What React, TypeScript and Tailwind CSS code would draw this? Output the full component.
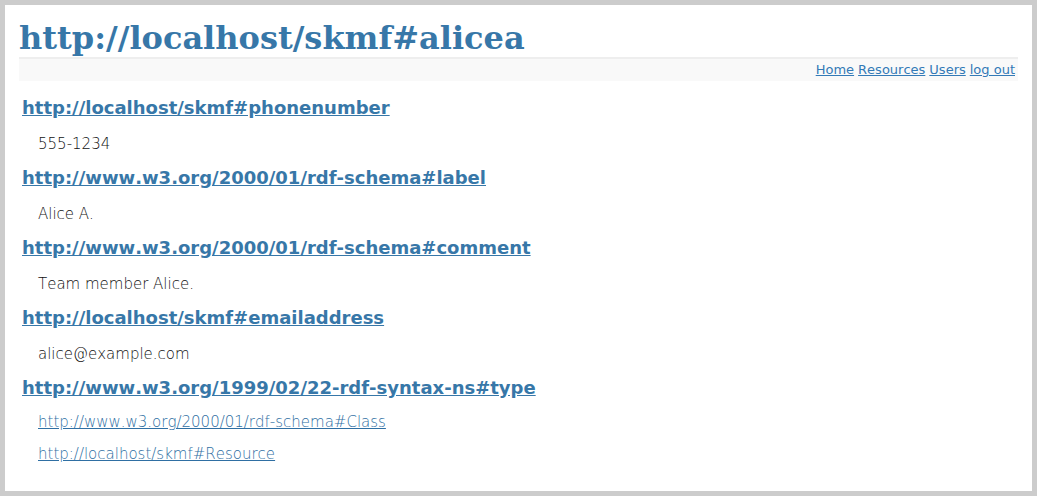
import React from "react";

const props = [
  { uri: "http://localhost/skmf#phonenumber", values: [{ text: "555-1234" }] },
  { uri: "http://www.w3.org/2000/01/rdf-schema#label", values: [{ text: "Alice A." }] },
  { uri: "http://www.w3.org/2000/01/rdf-schema#comment", values: [{ text: "Team member Alice." }] },
  { uri: "http://localhost/skmf#emailaddress", values: [{ text: "alice@example.com" }] },
  {
    uri: "http://www.w3.org/1999/02/22-rdf-syntax-ns#type",
    values: [
      { text: "http://www.w3.org/2000/01/rdf-schema#Class", link: true },
      { text: "http://localhost/skmf#Resource", link: true },
    ],
  },
];

export default function App() {
  return (
    <div className="h-[496px] border-[5px] border-[#cccccc] bg-white px-[14px] font-['DejaVu_Sans',sans-serif] [font-kerning:none]">
      <h1 className="pt-[14px] font-['DejaVu_Serif',serif] text-[32px] font-bold leading-[38px] text-[#3777a8]">
        http://localhost/skmf#alicea
      </h1>
      <div className="flex h-[24px] items-center justify-end gap-[4px] border-t-2 border-[#eeeeee] bg-[#f9f9f9] pr-[3px] text-[13px] text-[#337ab7]">
        <a href="#" className="underline">Home</a>
        <a href="#" className="underline">Resources</a>
        <a href="#" className="underline">Users</a>
        <a href="#" className="underline">log out</a>
      </div>
      <div className="pt-[9px] pl-[3px]">
        {props.map((p) => (
          <div key={p.uri}>
            <div className="flex h-[35px] items-center">
              <a href="#" className="text-[18px] font-bold text-[#3777a8] underline">
                {p.uri}
              </a>
            </div>
            {p.values.map((v) =>
              v.link ? (
                <div key={v.text} className="flex h-[32px] items-center pt-[3px] pl-[16px] text-[15px] font-extralight">
                  <a href="#" className="text-[#2f6fa3] underline">{v.text}</a>
                </div>
              ) : (
                <div key={v.text} className="flex h-[35px] items-center pt-[3px] pl-[16px] text-[15px] font-extralight text-[#111111]">
                  {v.text}
                </div>
              )
            )}
          </div>
        ))}
      </div>
    </div>
  );
}
